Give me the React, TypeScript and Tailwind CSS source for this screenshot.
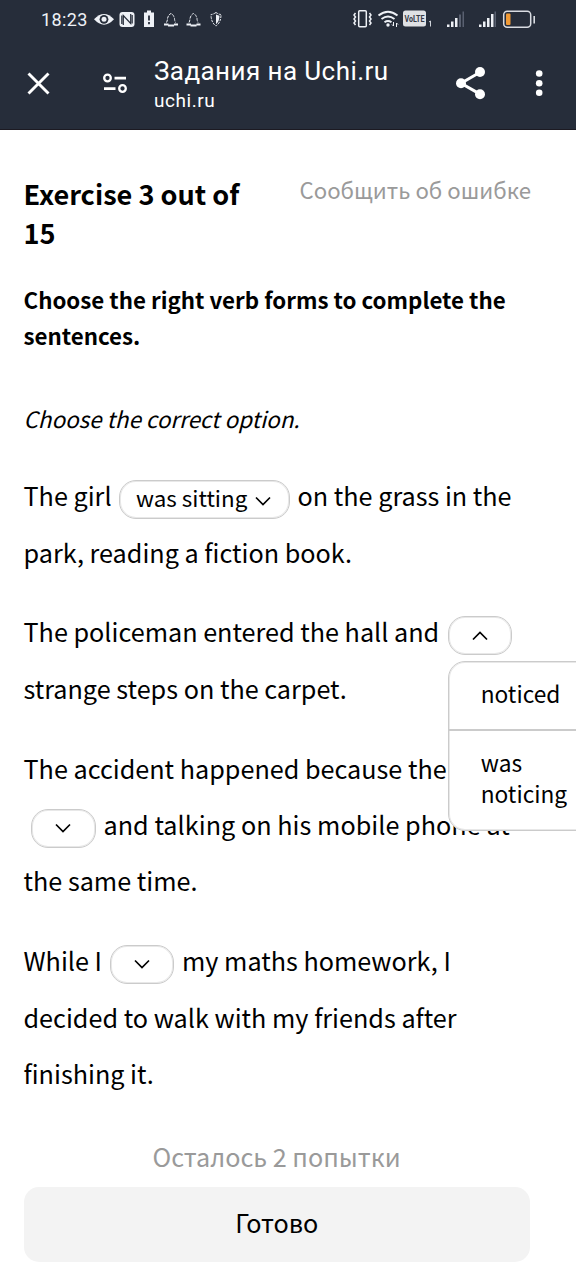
import React from "react";

const sans = "font-['Noto_Sans_CJK_SC','Noto_Sans',sans-serif]";

function StatusBar() {
  return (
    <div className="flex h-[38px] items-center pl-[41px] text-[#eef1f6]">
      <span className="w-[48px] whitespace-nowrap pt-px font-['Roboto',sans-serif] text-[18px] leading-none tracking-[0.4px]">18:23</span>
      <svg className="ml-[4px] h-[20px] w-[134px]" viewBox="93 9 134 20" fill="none">
        <path d="M94 19.300Q104 8.500 114 19.300Q104 30 94 19.300Z" fill="#eef1f6" />
        <circle cx="104" cy="19.300" r="4.400" fill="#262d3a" />
        <circle cx="104" cy="19.300" r="2.500" fill="#eef1f6" />
        <rect x="119.500" y="12" width="15" height="15" rx="3" fill="#eef1f6" />
        <path d="M123.300 25V15.500L130.700 23.500V14M121.800 24V15.500M132.200 15V23.500" stroke="#262d3a" strokeWidth="1.200" />
        <path d="M147 10.500h4v2h3v14.500h-10V12.500h3Z" fill="#eef1f6" />
        <path d="M149 15.500v5M149 22v2.200" stroke="#262d3a" strokeWidth="1.800" />
        <g stroke="#eef1f6" strokeWidth="1">
          <path d="M166.500 22.500q1-2 1-4 1-4 3.500-5 2.500 1 3.500 5 0 2 1 4" strokeDasharray="3 1" />
          <path d="M164 24.500h4.500M174 24.500h4M168 25.500h6" strokeWidth="1.800" />
          <path d="M189 22.500q1-2 1-4 1-4 3.500-5 2.500 1 3.500 5 0 2 1 4" strokeDasharray="3 1" />
          <path d="M186.500 24.500h4.500M196.500 24.500h4M190.500 25.500h6" strokeWidth="1.800" />
          <path d="M216 12.500q-3 2-5 2 0 8 5 11.500 5-3.500 5-11.500-2 0-5-2Z" strokeDasharray="2.500 1" />
        </g>
        <path d="M216 14.500q2 1 3.500 1.200 0 5.500-3.500 8.500Z" fill="#eef1f6" />
      </svg>
      <svg className="ml-[125px] h-[24px] w-[186px]" viewBox="352 7 186 24" fill="none">
        <rect x="358.700" y="10.700" width="7.600" height="16" rx="1" stroke="#eef1f6" strokeWidth="1.500" />
        <path d="M355.500 13l-1.500 2 1.500 2-1.500 2 1.500 2-1.500 2 1.500 2M369.500 13l1.500 2-1.500 2 1.500 2-1.500 2 1.500 2-1.500 2" stroke="#eef1f6" strokeWidth="1.500" />
        <path d="M378.500 15.500q9.500-7.500 19 0M381.500 19q6.500-5 13 0M384.500 22.300q3.500-2.500 7 0" stroke="#eef1f6" strokeWidth="1.900" />
        <circle cx="388" cy="25" r="1.700" fill="#eef1f6" />
        <path d="M393.500 22v4M396.500 23v4M392 24.500l1.500 1.500M396.500 23l1.500 1.500" stroke="#eef1f6" strokeWidth="1" />
        <rect x="403" y="10.500" width="23" height="16" rx="2.500" fill="#dfe1e4" />
        <text x="414.500" y="22.300" textAnchor="middle" textLength="20" lengthAdjust="spacingAndGlyphs" fontSize="9.500" fontWeight="700" fontFamily="Roboto" fill="#353a45">VoLTE</text>
        <path d="M429 22l1.500-1v5.500" stroke="#cfd3da" strokeWidth="1" />
        <g fill="#eef1f6">
          <path d="M447 24.500h2.500V27H447ZM451 21.500h2.500V27H451ZM455 18h2.500v9H455Z" />
          <path d="M479 24.500h2.500V27H479ZM483 21.500h2.500V27H483ZM487 18h2.500v9H487ZM491 14h2.500v13H491Z" />
        </g>
        <path d="M459 14.500h2V27h-2ZM462.500 11.500h1.500V27h-1.500ZM494.500 11.500h1.500V27h-1.500Z" fill="#596070" />
        <rect x="503.700" y="11.200" width="27" height="16" rx="3.500" stroke="#d9dce2" strokeWidth="1.500" />
        <rect x="506" y="13.500" width="4.500" height="11.500" rx="1" fill="#f09a36" />
        <path d="M534.200 16v7.500" stroke="#d9dce2" strokeWidth="1.600" />
      </svg>
    </div>
  );
}

function BrowserBar() {
  return (
    <div className="flex h-[91px] text-white">
      <svg className="ml-[26px] mt-[32px] h-[26px] w-[26px]" viewBox="26 70 26 26">
        <path d="M28.500 73.500l20 20M48.500 73.500l-20 20" stroke="white" strokeWidth="2.900" />
      </svg>
      <svg className="ml-[50px] mt-[34px] h-[24px] w-[28px]" viewBox="102 72 28 24" fill="none" stroke="white">
        <circle cx="107.500" cy="78" r="3.300" strokeWidth="2.300" />
        <circle cx="122.500" cy="88.500" r="3.300" strokeWidth="2.300" />
        <path d="M114.500 78.200h11.500M104 88.700h11.500" strokeWidth="2.700" />
      </svg>
      <div className="ml-[24px] w-[290px] whitespace-nowrap font-['Roboto',sans-serif]">
        <div className="mt-[17px] text-[26px] leading-[32px] tracking-[0.42px]"><span>Задания на Uchi.ru</span></div>
        <div className="mt-px text-[19px] leading-[26px] tracking-[0.55px]"><span>uchi.ru</span></div>
      </div>
      <svg className="ml-[10px] mt-[26px] h-[38px] w-[34px]" viewBox="454 64 34 38">
        <path d="M480.500 72L461 83.200L480.500 94.400" stroke="white" strokeWidth="3" fill="none" />
        <circle cx="480" cy="72" r="5" fill="white" /><circle cx="461" cy="83.200" r="5" fill="white" /><circle cx="480" cy="94.300" r="5" fill="white" />
      </svg>
      <svg className="ml-[44px] mt-[30px] h-[30px] w-[14px]" viewBox="532 68 14 30" fill="white">
        <circle cx="539.200" cy="73.500" r="3.300" /><circle cx="539.200" cy="83.200" r="3.300" /><circle cx="539.200" cy="92.800" r="3.300" />
      </svg>
    </div>
  );
}

function Chevron({ up = false }: { up?: boolean }) {
  return (
    <svg className="h-[10px] w-[16px] shrink-0" viewBox="0 0 16 10" fill="none">
      <path d={up ? "M1 8.500L8 1.500L15 8.500" : "M1 1.500L8 8.500L15 1.500"} stroke="black" strokeWidth="1.700" />
    </svg>
  );
}

const outline = "rounded-[17px] border border-[#cbcbcb] bg-white shadow-[inset_0_0_0_1px_#e8e8e8]";
const box = `flex h-[39px] shrink-0 items-center ${outline}`;
const row = "flex h-[56.4px] items-center whitespace-nowrap";

export default function App() {
  return (
    <div className={`h-[1280px] w-[576px] overflow-hidden bg-white text-black ${sans}`}>
      <header className="h-[130px] border-b border-[#1c1a22] bg-[#262d3a]">
        <StatusBar />
        <BrowserBar />
      </header>
      <main className="flex flex-col pl-[23.5px]">
        <div className="mt-[44px] flex justify-between pr-[45px]">
          <h1 className="w-[230px] text-[27.1px] font-bold leading-[39px]">Exercise 3 out of 15</h1>
          <a className="whitespace-nowrap text-[22.2px] leading-[30px] text-[#9a9a9a]">Сообщить об ошибке</a>
        </div>
        <h2 className="mt-[29px] whitespace-nowrap text-[22.3px] font-bold leading-[36px]">Choose the right verb forms to complete the<br />sentences.</h2>
        <p className="mt-[47px] text-[22.4px] italic leading-[36px]"><span>Choose the correct option.</span></p>
        <section className="mt-[32px] text-[25.2px]">
          <div className="mb-[23.4px]">
            <div className={row}>
              <span>The girl</span>
              <button className={`${box} relative top-[3.2px] ml-[7px] w-[171px] pl-[16.5px] text-[22.4px]`}>
                <span className="relative -top-[2px] w-[118.500px] text-left">was sitting</span>
                <span className="relative top-[2px] flex"><Chevron /></span>
              </button>
              <span className="ml-[8px]">on the grass in the</span>
            </div>
            <div className={row}><span>park, reading a fiction book.</span></div>
          </div>
          <div className="mb-[23.4px]">
            <div className={row}>
              <span>The policeman entered the hall and</span>
              <div className="relative top-[3.2px] ml-[9px]">
                <button className={`${box} w-[64px] justify-center`}><Chevron up /></button>
                <div className={`absolute left-0 top-[45px] z-10 w-[150px] text-[22.7px] leading-[31px] ${outline}`}>
                  <div className="h-[69px] border-b-2 border-[#cbcbcb] pl-[31.5px] pt-[16px]"><span>noticed</span></div>
                  <div className="h-[99px] pl-[31.5px] pt-[16px]"><span>was</span><br /><span>noticing</span></div>
                </div>
              </div>
            </div>
            <div className={row}><span>strange steps on the carpet.</span></div>
          </div>
          <div className="mb-[23.4px]">
            <div className={row}><span>The accident happened because the</span></div>
            <div className={row}>
              <button className={`${box} relative top-[3.2px] ml-[7px] w-[65px] justify-center`}><Chevron /></button>
              <span className="ml-[8px] tracking-[0.03px]">and talking on his mobile phone at</span>
            </div>
            <div className={row}><span>the same time.</span></div>
          </div>
          <div>
            <div className={row}>
              <span>While I</span>
              <button className={`${box} relative top-[3.2px] ml-[8px] w-[64px] justify-center`}><Chevron /></button>
              <span className="ml-[8px]">my maths homework, I</span>
            </div>
            <div className={row}><span>decided to walk with my friends after</span></div>
            <div className={row}><span>finishing it.</span></div>
          </div>
        </section>
        <div className="mt-[36px] w-[506px] text-center text-[25.2px] leading-[36px] text-[#9a9a9a]"><span>Осталось 2 попытки</span></div>
        <button className="mt-[13px] h-[75px] w-[506.500px] rounded-[15px] bg-[#f3f3f3] pb-[3px] text-[25.2px]"><span>Готово</span></button>
      </main>
    </div>
  );
}
